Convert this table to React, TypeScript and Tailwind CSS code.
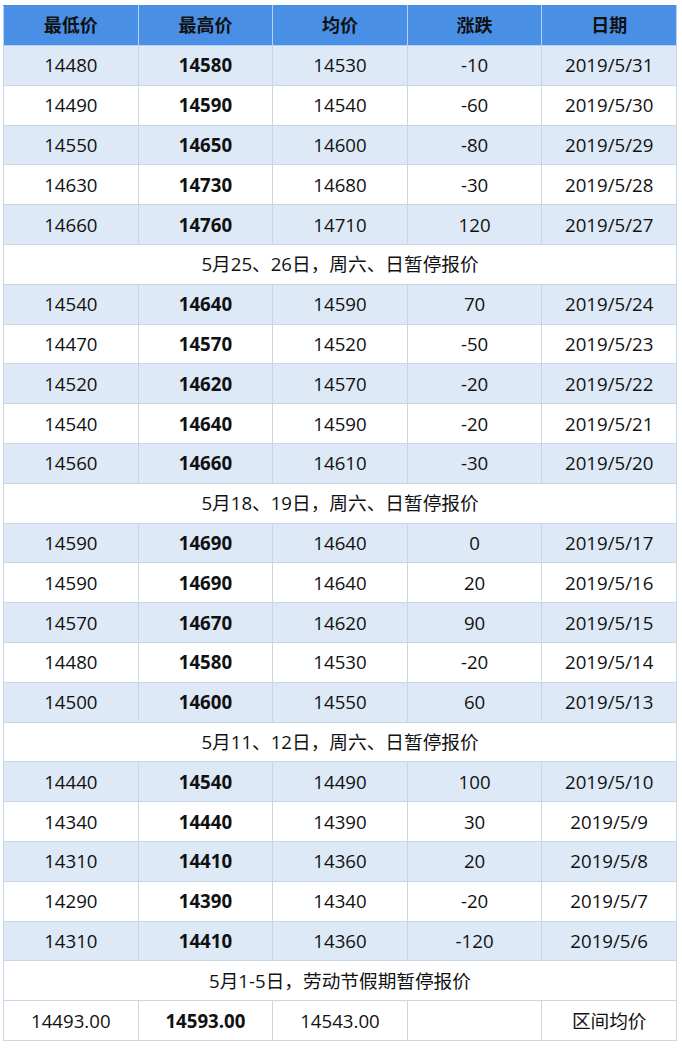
import React from "react";

type Row = [string, string, string, string, string];
type Item = { kind: "data"; row: Row } | { kind: "note"; text: string };

const items: Item[] = [
  { kind: "data", row: ["14480", "14580", "14530", "-10", "2019/5/31"] },
  { kind: "data", row: ["14490", "14590", "14540", "-60", "2019/5/30"] },
  { kind: "data", row: ["14550", "14650", "14600", "-80", "2019/5/29"] },
  { kind: "data", row: ["14630", "14730", "14680", "-30", "2019/5/28"] },
  { kind: "data", row: ["14660", "14760", "14710", "120", "2019/5/27"] },
  { kind: "note", text: "5月25、26日，周六、日暂停报价" },
  { kind: "data", row: ["14540", "14640", "14590", "70", "2019/5/24"] },
  { kind: "data", row: ["14470", "14570", "14520", "-50", "2019/5/23"] },
  { kind: "data", row: ["14520", "14620", "14570", "-20", "2019/5/22"] },
  { kind: "data", row: ["14540", "14640", "14590", "-20", "2019/5/21"] },
  { kind: "data", row: ["14560", "14660", "14610", "-30", "2019/5/20"] },
  { kind: "note", text: "5月18、19日，周六、日暂停报价" },
  { kind: "data", row: ["14590", "14690", "14640", "0", "2019/5/17"] },
  { kind: "data", row: ["14590", "14690", "14640", "20", "2019/5/16"] },
  { kind: "data", row: ["14570", "14670", "14620", "90", "2019/5/15"] },
  { kind: "data", row: ["14480", "14580", "14530", "-20", "2019/5/14"] },
  { kind: "data", row: ["14500", "14600", "14550", "60", "2019/5/13"] },
  { kind: "note", text: "5月11、12日，周六、日暂停报价" },
  { kind: "data", row: ["14440", "14540", "14490", "100", "2019/5/10"] },
  { kind: "data", row: ["14340", "14440", "14390", "30", "2019/5/9"] },
  { kind: "data", row: ["14310", "14410", "14360", "20", "2019/5/8"] },
  { kind: "data", row: ["14290", "14390", "14340", "-20", "2019/5/7"] },
  { kind: "data", row: ["14310", "14410", "14360", "-120", "2019/5/6"] },
  { kind: "note", text: "5月1-5日，劳动节假期暂停报价" },
];

const font = { fontFamily: '"Open Sans", "Noto Sans CJK SC", sans-serif' };

export default function App() {
  let dataIdx = 0;
  return (
    <div className="w-[682px] h-[1048px] bg-white pt-[5px] pl-[3px]" style={font}>
      <table className="w-[674px] border-collapse table-fixed text-[18.67px] text-[#111111]">
        <thead>
          <tr className="h-[40px] bg-[#4a8fe6]">
            {["最低价", "最高价", "均价", "涨跌", "日期"].map((h) => (
              <th
                key={h}
                className="border border-[#b8d2f2] border-t-[#4a8fe6] font-bold text-center p-0 text-[18px]"
              >
                {h}
              </th>
            ))}
          </tr>
        </thead>
        <tbody>
          {items.map((it, i) => {
            if (it.kind === "note") {
              dataIdx = 0;
              return (
                <tr key={i} className="h-[39.8px] bg-white">
                  <td colSpan={5} className="border border-[#c9d6e3] text-center p-0">
                    {it.text}
                  </td>
                </tr>
              );
            }
            const even = dataIdx % 2 === 0;
            dataIdx++;
            return (
              <tr key={i} className={`h-[39.8px] ${even ? "bg-[#dde9f6]" : "bg-white"}`}>
                {it.row.map((c, j) => (
                  <td
                    key={j}
                    className={`border border-[#c9d6e3] text-center p-0 ${j === 1 ? "font-bold" : ""}`}
                  >
                    {c}
                  </td>
                ))}
              </tr>
            );
          })}
          <tr className="h-[39.8px] bg-white">
            <td className="border border-[#c9d6e3] text-center p-0">14493.00</td>
            <td className="border border-[#c9d6e3] text-center p-0 font-bold">14593.00</td>
            <td className="border border-[#c9d6e3] text-center p-0">14543.00</td>
            <td className="border border-[#c9d6e3] text-center p-0"></td>
            <td className="border border-[#c9d6e3] text-center p-0">区间均价</td>
          </tr>
        </tbody>
      </table>
    </div>
  );
}
